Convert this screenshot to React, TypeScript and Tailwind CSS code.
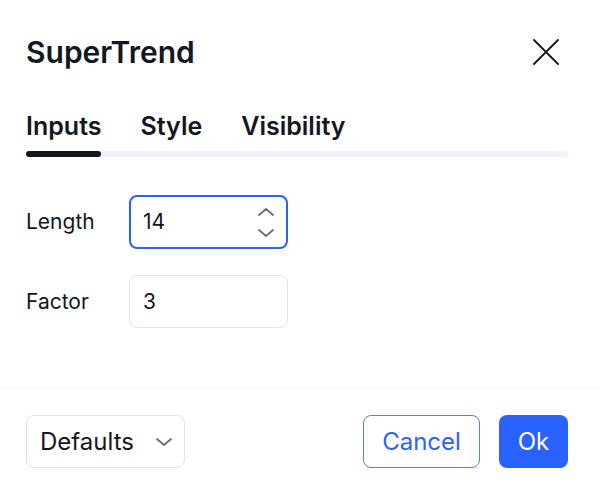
import React from 'react';

const Chevron = ({ dir, w = 16, h = 8, color = '#6a6d78' }: { dir: 'up' | 'down'; w?: number; h?: number; color?: string }) => (
  <svg width={w} height={h} viewBox={`0 0 ${w} ${h}`} fill="none">
    <path
      d={dir === 'up' ? `M1 ${h - 1}L${w / 2} 1L${w - 1} ${h - 1}` : `M1 1L${w / 2} ${h - 1}L${w - 1} 1`}
      stroke={color}
      strokeWidth="1.8"
      strokeLinecap="round"
      strokeLinejoin="round"
    />
  </svg>
);

export default function App() {
  return (
    <div className="w-[600px] h-[493px] bg-white text-[#131722] flex flex-col overflow-hidden" style={{ fontFamily: 'Inter, "Noto Sans", sans-serif' }}>
      {/* Header */}
      <div className="flex items-center justify-between pl-[26px] pr-[41px] pt-[32px] h-[72px]">
        <h1 className="text-[30px] leading-[36px] font-semibold">SuperTrend</h1>
        <button aria-label="Close">
          <svg width="26" height="26" viewBox="0 0 26 26" fill="none">
            <path d="M1 1L25 25M25 1L1 25" stroke="#131722" strokeWidth="1.8" strokeLinecap="round" />
          </svg>
        </button>
      </div>

      {/* Tabs */}
      <div className="pl-[26px] pr-[32px] mt-[39px]">
        <div className="flex gap-[39px] text-[25px] font-semibold leading-[30px]">
          <span>Inputs</span>
          <span>Style</span>
          <span>Visibility</span>
        </div>
        <div className="mt-[10px] h-[6px] bg-[#f0f3fa] rounded-full flex">
          <div className="w-[75px] h-[6px] bg-[#131722] rounded-full" />
        </div>
      </div>

      {/* Inputs */}
      <div className="px-[26px] pt-[38px] flex flex-col gap-[26px]">
        <div className="flex items-center">
          <span className="w-[103px] text-[21px]">Length</span>
          <div className="w-[159px] h-[54px] rounded-[8px] border-2 border-[#2962ff] flex items-center justify-between pl-[12px] pr-[12px]">
            <span className="text-[21px]">14</span>
            <div className="flex flex-col gap-[13px] items-center">
              <Chevron dir="up" />
              <Chevron dir="down" />
            </div>
          </div>
        </div>
        <div className="flex items-center">
          <span className="w-[103px] text-[21px]">Factor</span>
          <div className="w-[159px] h-[53px] rounded-[8px] border border-[#e0e3eb] flex items-center pl-[13px]">
            <span className="text-[21px]">3</span>
          </div>
        </div>
      </div>

      <div className="flex-1" />
      <div className="border-t border-[#f0f3fa]" />

      {/* Footer */}
      <div className="flex items-center justify-between pl-[26px] pr-[32px] pt-[26px] pb-[25px]">
        <button className="w-[159px] h-[53px] rounded-[8px] border border-[#e0e3eb] flex items-center justify-between pl-[13px] pr-[12px] text-[24px]">
          <span>Defaults</span>
          <Chevron dir="down" w={16} h={8} />
        </button>
        <div className="flex gap-[19px]">
          <button className="w-[117px] h-[53px] rounded-[8px] border border-[#4f7ff5] text-[#2962ff] text-[24px]">Cancel</button>
          <button className="w-[69px] h-[53px] rounded-[8px] bg-[#2962ff] text-white text-[24px]">Ok</button>
        </div>
      </div>
    </div>
  );
}
